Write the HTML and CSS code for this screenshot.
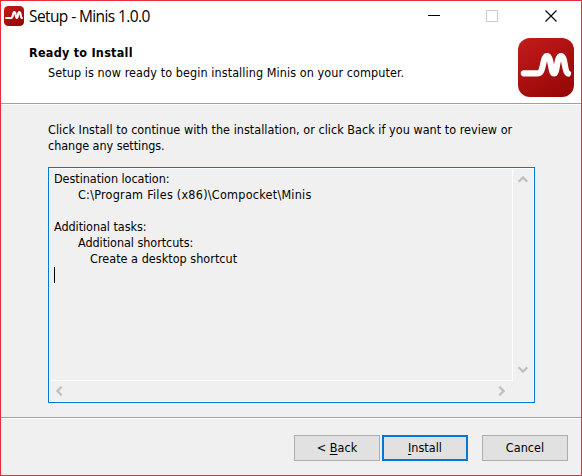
FILE: index.html
```html
<!DOCTYPE html>
<html lang="en">
<head>
<meta charset="utf-8">
<title>Setup - Minis 1.0.0</title>
<link rel="stylesheet" href="styles.css">
</head>
<body>
<svg class="defs" width="0" height="0" aria-hidden="true">
  <linearGradient id="red" x1="0.2" y1="0" x2="0.8" y2="1"><stop offset="0" stop-color="#c01a1a"/><stop offset="1" stop-color="#960606"/></linearGradient>
  <symbol id="logo" viewBox="0 0 56 59" preserveAspectRatio="none">
    <rect width="56" height="59" rx="12" fill="url(#red)"/>
    <path d="M5.800 35.300H20C26 35.300 24.500 18 29 18C33.500 18 32.500 35.500 36 35.500C39.500 35.500 38.500 18 43 18C47.500 18 46 33.500 50 35.500" fill="none" stroke="#fff" stroke-width="6.200" stroke-linecap="round" stroke-linejoin="round"/>
  </symbol>
</svg>
<div class="window">
  <header class="header">
    <div class="titlebar">
      <svg class="app-icon"><use href="#logo"/></svg>
      <span class="title">Setup - Minis 1.0.0</span>
      <svg class="controls" width="130" height="13" viewBox="0 0 130 13" fill="none" shape-rendering="crispEdges">
        <path d="M0 5.500H12" stroke="#000"/>
        <rect x="58.500" y="0.500" width="11" height="11" stroke="#ccc"/>
        <path d="M117.500 0.500L128.500 11.500M128.500 0.500L117.500 11.500" stroke="#000" stroke-width="1.100" shape-rendering="auto"/>
      </svg>
    </div>
    <div class="banner">
      <div class="banner-text">
        <h1>Ready to Install</h1>
        <p class="sub">Setup is now ready to begin installing Minis on your computer.</p>
      </div>
      <svg class="logo"><use href="#logo"/></svg>
    </div>
  </header>
  <main class="content">
    <p class="intro">Click Install to continue with the installation, or click Back if you want to review or<br><span class="tight">change any settings.</span></p>
    <div class="memo">
      <div class="memo-text">
        <div class="tight">Destination location:</div>
        <div class="in1 path">C:\Program Files (x86)\Compocket\Minis</div>
        <div class="blank"></div>
        <div class="tight">Additional tasks:</div>
        <div class="in1 tight">Additional shortcuts:</div>
        <div class="in2">Create a desktop shortcut</div>
        <div class="caret"></div>
      </div>
      <div class="vbar">
        <svg width="10" height="7" viewBox="0 0 10 7"><path d="M0.700 5.700L5 1.400L9.300 5.700"/></svg>
        <svg width="10" height="7" viewBox="0 0 10 7"><path d="M0.700 1.300L5 5.600L9.300 1.300"/></svg>
      </div>
      <div class="hbar">
        <svg width="7" height="10" viewBox="0 0 7 10"><path d="M5.700 0.700L1.400 5L5.700 9.300"/></svg>
        <svg width="7" height="10" viewBox="0 0 7 10"><path d="M1.300 0.700L5.600 5L1.300 9.300"/></svg>
      </div>
    </div>
  </main>
  <footer class="footer">
    <button class="btn back">&lt; <u>B</u>ack</button>
    <button class="btn primary"><u>I</u>nstall</button>
    <button class="btn cancel">Cancel</button>
  </footer>
</div>
</body>
</html>
```
FILE: styles.css
```css
* { box-sizing: border-box; }
body { margin: 0; }
.defs { position: absolute; }
.window {
  width: 582px; height: 476px; border: 1px solid #e62b3a; background: #f0f0f0; color: #000;
  display: flex; flex-direction: column;
  font: 12.5px/16px "DejaVu Sans Condensed", "DejaVu Sans", sans-serif; font-stretch: condensed;
  letter-spacing: 0.03px; white-space: nowrap;
}
h1, p { margin: 0; font-size: inherit; }
.header { height: 103px; background: #fff; border-bottom: 1px solid #a0a0a0; }
.titlebar { display: flex; height: 31px; padding: 5px 0 0 3px; }
.app-icon { width: 20px; height: 20px; flex: none; }
.title { width: 399px; margin-left: 5px; flex: none; font: 15.5px/21px "Open Sans", sans-serif; letter-spacing: -0.6px; }
.controls { margin-top: 4px; flex: none; }
.banner { display: flex; justify-content: space-between; padding: 6px 7px 0 28px; }
.banner-text { padding-top: 7px; }
h1 { font-weight: bold; letter-spacing: 0.25px; }
.sub { margin: 4px 0 0 19px; letter-spacing: 0.08px; }
.logo { width: 56px; height: 59px; }
.content { height: 313px; border-top: 1px solid #fff; padding: 17px 46px 0 47px; }
.memo {
  width: 487px; height: 236px; margin-top: 13px; border: 1px solid #0078d7; padding: 1px;
  box-shadow: inset 0 0 0 1px #fff; display: grid; grid-template: 212px 20px / 463px 20px;
}
.memo-text { padding: 2px 0 0 4px; border-right: 1px solid #fff; border-bottom: 1px solid #fff; }
.in1 { padding-left: 24px; }
.in2 { padding-left: 36px; }
.path { letter-spacing: 0.25px; }
.tight { letter-spacing: -0.05px; }
.blank { height: 16px; }
.caret { width: 1px; height: 16px; background: #000; }
.vbar { display: flex; flex-direction: column; align-items: center; justify-content: space-between; padding: 7px 0 8px; }
.hbar { display: flex; align-items: center; justify-content: space-between; padding: 0 8px 0 6px; }
.memo svg { fill: none; stroke: #bfbfbf; stroke-width: 2.200; }
.footer { flex: 1; border-top: 1px solid #a0a0a0; box-shadow: inset 0 1px #fff; display: flex; padding: 17px 0 0 293px; }
.btn { width: 86px; height: 26px; margin: 0 2px 0 0; padding: 0; border: 1px solid #adadad; background: #e1e1e1; color: #000; font: inherit; letter-spacing: inherit; }
.primary { border: 2px solid #0078d7; margin-right: 14px; }
u { text-underline-offset: 2px; text-decoration-thickness: 1px; text-decoration-skip-ink: none; }
```
